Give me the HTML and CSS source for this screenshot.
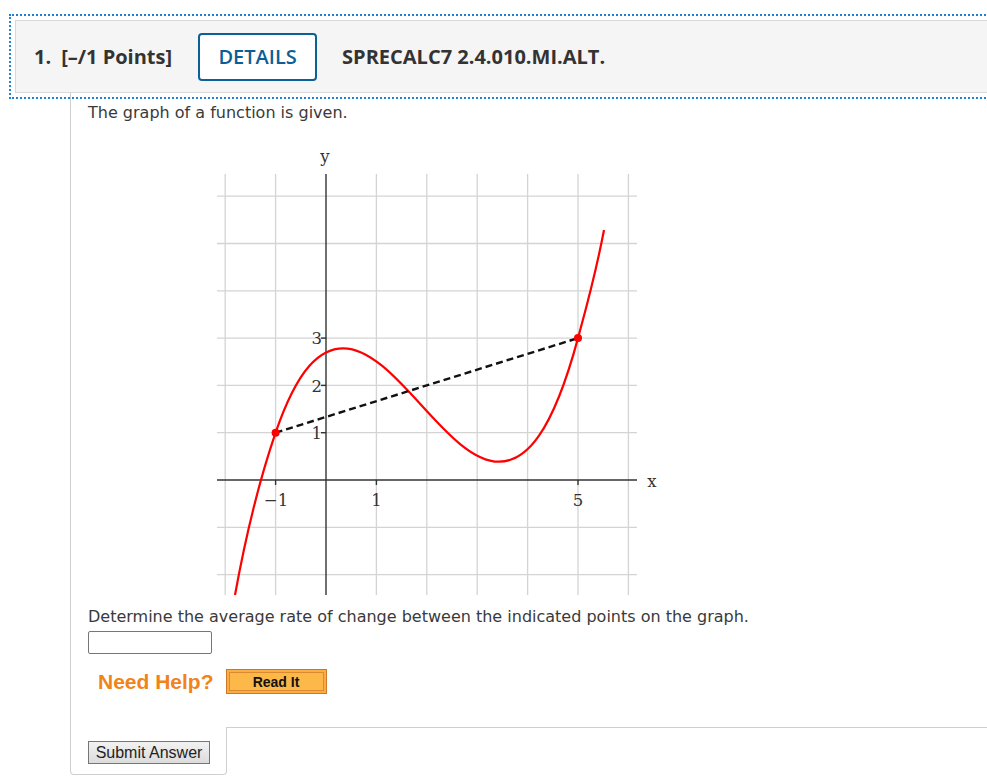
FILE: index.html
```html
<!DOCTYPE html>
<html>
<head>
<meta charset="utf-8">
<link rel="stylesheet" href="styles.css">
</head>
<body>
<div class="question">
  <div class="qhead">
    <span class="qnum">1.</span>
    <span class="qpts">[–/1 Points]</span>
    <button class="details">DETAILS</button>
    <span class="qid">SPRECALC7 2.4.010.MI.ALT.</span>
  </div>
  <div class="qbody">
    <p class="txt first">The graph of a function is given.</p>
    <svg class="graph" width="460" height="460" viewBox="0 0 460 460">
      <g class="grid">
        <line x1="25.2" y1="34" x2="25.2" y2="455"/>
        <line x1="75.6" y1="34" x2="75.6" y2="455"/>
        <line x1="176.4" y1="34" x2="176.4" y2="455"/>
        <line x1="226.8" y1="34" x2="226.8" y2="455"/>
        <line x1="277.2" y1="34" x2="277.2" y2="455"/>
        <line x1="327.6" y1="34" x2="327.6" y2="455"/>
        <line x1="378" y1="34" x2="378" y2="455"/>
        <line x1="428.4" y1="34" x2="428.4" y2="455"/>
        <line x1="17" y1="56.2" x2="437" y2="56.2"/>
        <line x1="17" y1="103.5" x2="437" y2="103.5"/>
        <line x1="17" y1="150.8" x2="437" y2="150.8"/>
        <line x1="17" y1="198.1" x2="437" y2="198.1"/>
        <line x1="17" y1="245.4" x2="437" y2="245.4"/>
        <line x1="17" y1="292.7" x2="437" y2="292.7"/>
        <line x1="17" y1="387.3" x2="437" y2="387.3"/>
        <line x1="17" y1="434.6" x2="437" y2="434.6"/>
      </g>
      <g class="axes">
        <line x1="126" y1="34" x2="126" y2="455"/>
        <line x1="17" y1="340" x2="437" y2="340"/>
        <line x1="75.6" y1="340" x2="75.6" y2="345"/>
        <line x1="176.4" y1="340" x2="176.4" y2="345"/>
        <line x1="378" y1="340" x2="378" y2="345"/>
        <line x1="121" y1="198.1" x2="126" y2="198.1"/>
        <line x1="121" y1="245.4" x2="126" y2="245.4"/>
        <line x1="121" y1="292.7" x2="126" y2="292.7"/>
      </g>
      <g class="labels">
        <text x="125" y="22" text-anchor="middle">y</text>
        <text x="452" y="347" text-anchor="middle">x</text>
        <text x="76" y="366" text-anchor="middle">−1</text>
        <text x="176.4" y="366" text-anchor="middle">1</text>
        <text x="378" y="366" text-anchor="middle">5</text>
        <text x="122" y="204" text-anchor="end">3</text>
        <text x="122" y="251.5" text-anchor="end">2</text>
        <text x="122" y="299" text-anchor="end">1</text>
      </g>
      <path class="curve" d="M35,455 C48.5,380.7 62.1,332.2 75.6,292.7 C98.2,226.8 120.7,208.3 143.3,208.3 C169.3,208.3 195.2,236.4 221.2,265 C247.1,293.5 273.1,321.7 299,321.7 C325.3,321.7 351.7,295.5 378,198.1 C386.7,166 395.3,135.8 404,90"/>
      <line class="secant" x1="75.6" y1="292.7" x2="378" y2="198.1"/>
      <circle class="pt" cx="75.6" cy="292.7" r="4"/>
      <circle class="pt" cx="378" cy="198.1" r="4"/>
    </svg>
    <p class="txt prompt">Determine the average rate of change between the indicated points on the graph.</p>
    <input class="answer" type="text">
    <div class="help">
      <span class="needhelp">Need Help?</span>
      <button class="readit">Read It</button>
    </div>
  </div>
  <div class="qfoot">
    <div class="submitbox">
      <button class="submit">Submit Answer</button>
    </div>
    <div class="filler"></div>
  </div>
</div>
</body>
</html>
```
FILE: styles.css
```css
html, body {
  margin: 0;
  padding: 0;
  background: #fff;
  overflow: hidden;
}
body {
  font-family: "DejaVu Sans", Verdana, sans-serif;
  color: #3a3a3a;
}
.question {
  padding-top: 20px;
  padding-left: 15px;
  margin-right: -40px;
}
.qhead {
  display: flex;
  align-items: center;
  height: 71px;
  background: #f5f5f5;
  border: 1px solid #d9d9d9;
  outline: 2px dotted #1f80d8;
  outline-offset: 4px;
  padding-left: 18px;
  font-family: "Open Sans", sans-serif;
  font-size: 20px;
  font-weight: 700;
  color: #333;
}
.qnum {
  margin-right: 10px;
}
.qpts {
  margin-right: 26px;
}
.details {
  font-family: "Open Sans", sans-serif;
  font-size: 20px;
  font-weight: 600;
  color: #0b5f96;
  background: #fff;
  border: 2px solid #0b6098;
  border-radius: 4px;
  height: 48px;
  width: 119px;
  padding: 0;
  margin-right: 25px;
}
.qbody {
  margin-left: 55px;
  border-left: 1px solid #cfcfcf;
  padding-left: 17px;
  padding-top: 10px;
  padding-bottom: 33px;
}
.txt {
  margin: 0;
  font-size: 16px;
  line-height: 19px;
}
.graph {
  display: block;
  margin-top: 18px;
  margin-left: 112px;
}
.grid line {
  stroke: #d4d4d4;
  stroke-width: 1.3;
}
.axes line {
  stroke: #333;
  stroke-width: 1.4;
}
.labels text {
  font-family: "DejaVu Serif", serif;
  font-size: 16.5px;
  fill: #333;
}
.curve {
  fill: none;
  stroke: #f00;
  stroke-width: 2.2;
}
.secant {
  stroke: #111;
  stroke-width: 2.4;
  stroke-dasharray: 7 4;
}
.pt {
  fill: #f00;
}
.prompt {
  margin-top: 7px;
}
.answer {
  display: block;
  box-sizing: border-box;
  width: 124px;
  height: 23px;
  margin: 5px 0 0 0;
  border: 1px solid #767676;
  border-radius: 2px;
  padding: 0 4px;
}
.help {
  display: flex;
  align-items: center;
  margin-top: 15px;
  margin-left: 10px;
  height: 25px;
}
.needhelp {
  font-family: "Liberation Sans", Arial, sans-serif;
  font-weight: 700;
  font-size: 21px;
  color: #f0841b;
  margin-right: 12px;
}
.readit {
  box-sizing: border-box;
  width: 101px;
  height: 25px;
  background: #fdb84a;
  border: 1px solid #d0782a;
  box-shadow: inset 0 0 0 2px #f9ad42, inset 0 0 0 3px #dc8a30;
  font-family: "Liberation Sans", Arial, sans-serif;
  font-weight: 700;
  font-size: 14px;
  color: #111;
  padding: 0;
}
.qfoot {
  display: flex;
}
.submitbox {
  margin-left: 55px;
  box-sizing: border-box;
  width: 157px;
  border-left: 1px solid #cfcfcf;
  border-right: 1px solid #cfcfcf;
  border-bottom: 1px solid #cfcfcf;
  border-radius: 0 0 4px 4px;
  padding: 14px 0 10px 17px;
}
.filler {
  flex: 1;
  border-top: 1px solid #cfcfcf;
}
.submit {
  box-sizing: border-box;
  width: 122px;
  height: 23px;
  font-family: "Liberation Sans", Arial, sans-serif;
  font-size: 16px;
  color: #222;
  background: linear-gradient(#f2f2f2, #dcdcdc);
  border: 1px solid #767676;
  border-radius: 0;
  padding: 0;
}
```
